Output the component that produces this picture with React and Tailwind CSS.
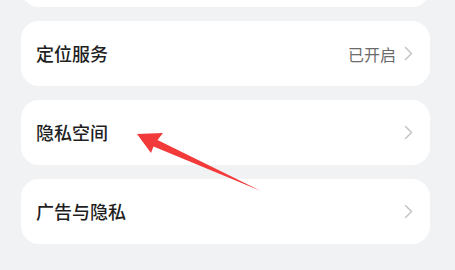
import React from "react";

function Chevron() {
  return (
    <svg width="9" height="15" viewBox="0 0 9 15" fill="none" className="shrink-0">
      <path d="M1.5 1.5L7.5 7.5L1.5 13.5" stroke="#c4c4c6" strokeWidth="1.5" strokeLinecap="round" strokeLinejoin="round" />
    </svg>
  );
}

function Row({ title, value, className = "" }) {
  return (
    <div className={`flex h-[65px] items-center justify-between rounded-[18px] bg-white pl-[15px] pr-[17px] ${className}`}>
      <span className="text-[18px] font-medium text-[#1f1f1f]">{title}</span>
      <div className="flex items-center gap-[8px]">
        {value && <span className="text-[16px] text-[#6b6b6b]">{value}</span>}
        <Chevron />
      </div>
    </div>
  );
}

export default function App() {
  return (
    <div
      className="relative h-[270px] w-[455px] overflow-hidden bg-[#f1f2f4]"
      style={{ fontFamily: '"Noto Sans CJK SC", "Noto Sans", sans-serif' }}
    >
      <div className="flex flex-col gap-[14px] pl-[21px] pr-[25px]">
        <Row title="" className="-mt-[58px]" />
        <Row title="定位服务" value="已开启" />
        <Row title="隐私空间" />
        <Row title="广告与隐私" />
      </div>
      <svg className="absolute left-0 top-0" width="455" height="270" viewBox="0 0 455 270">
        <polygon points="137,134 163,133 157.5,140 261,191 153.5,146.5 151,153" fill="#f23a3a" />
      </svg>
    </div>
  );
}
